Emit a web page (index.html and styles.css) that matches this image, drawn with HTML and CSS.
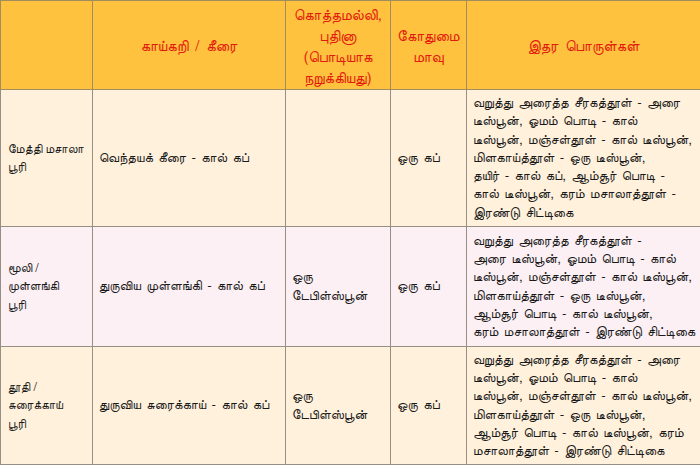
FILE: index.html
```html
<!DOCTYPE html>
<html lang="ta">
<head>
<meta charset="utf-8">
<link rel="stylesheet" href="styles.css">
</head>
<body>
<table class="recipes">
  <colgroup>
    <col class="c1"><col class="c2"><col class="c3"><col class="c4"><col class="c5">
  </colgroup>
  <thead>
    <tr class="head">
      <th></th>
      <th>காய்கறி / கீரை</th>
      <th>கொத்தமல்லி,<br>புதினா<br>(பொடியாக<br>நறுக்கியது)</th>
      <th>கோதுமை<br>மாவு</th>
      <th>இதர பொருள்கள்</th>
    </tr>
  </thead>
  <tbody>
    <tr class="r1">
      <td class="name">மேத்தி மசாலா<br>பூரி</td>
      <td>வெந்தயக் கீரை - கால் கப்</td>
      <td></td>
      <td>ஒரு கப்</td>
      <td>வறுத்து அரைத்த சீரகத்தூள் - அரை<br>டீஸ்பூன், ஓமம் பொடி - கால்<br>டீஸ்பூன், மஞ்சள்தூள் - கால் டீஸ்பூன்,<br>மிளகாய்த்தூள் - ஒரு டீஸ்பூன்,<br>தயிர் - கால் கப், ஆம்சூர் பொடி -<br>கால் டீஸ்பூன், கரம் மசாலாத்தூள் -<br>இரண்டு சிட்டிகை</td>
    </tr>
    <tr class="r2">
      <td class="name">மூலி /<br>முள்ளங்கி<br>பூரி</td>
      <td>துருவிய முள்ளங்கி - கால் கப்</td>
      <td>ஒரு<br>டேபிள்ஸ்பூன்</td>
      <td>ஒரு கப்</td>
      <td>வறுத்து அரைத்த சீரகத்தூள் -<br>அரை டீஸ்பூன், ஓமம் பொடி - கால்<br>டீஸ்பூன், மஞ்சள்தூள் - கால் டீஸ்பூன்,<br>மிளகாய்த்தூள் - ஒரு டீஸ்பூன்,<br>ஆம்சூர் பொடி - கால் டீஸ்பூன்,<br>கரம் மசாலாத்தூள் - இரண்டு சிட்டிகை</td>
    </tr>
    <tr class="r3">
      <td class="name">தூதி /<br>சுரைக்காய்<br>பூரி</td>
      <td>துருவிய சுரைக்காய் - கால் கப்</td>
      <td>ஒரு<br>டேபிள்ஸ்பூன்</td>
      <td>ஒரு கப்</td>
      <td>வறுத்து அரைத்த சீரகத்தூள் - அரை<br>டீஸ்பூன், ஓமம் பொடி - கால்<br>டீஸ்பூன், மஞ்சள்தூள் - கால் டீஸ்பூன்,<br>மிளகாய்த்தூள் - ஒரு டீஸ்பூன்,<br>ஆம்சூர் பொடி - கால் டீஸ்பூன், கரம்<br>மசாலாத்தூள் - இரண்டு சிட்டிகை</td>
    </tr>
  </tbody>
</table>
</body>
</html>
```
FILE: styles.css
```css
html, body {
  margin: 0;
  padding: 0;
  background: #ffffff;
}
body {
  font-family: "FreeSans", "Noto Sans Tamil", "Liberation Sans", sans-serif;
  font-size: 13.4px;
  color: #1a1a1a;
}
.recipes {
  border-collapse: collapse;
  table-layout: fixed;
  width: 700px;
}
.c1 { width: 92px; }
.c2 { width: 193px; }
.c3 { width: 105px; }
.c4 { width: 76px; }
.c5 { width: 234px; }
.recipes th,
.recipes td {
  border: 1px solid #958f84;
  padding: 2px 6px;
  vertical-align: middle;
  line-height: 18.3px;
  white-space: nowrap;
  overflow: hidden;
}
.recipes th {
  background: #fec23e;
  color: #e31b0e;
  font-weight: normal;
  font-size: 15px;
  word-spacing: 3px;
  text-align: center;
  line-height: 21px;
  padding: 3px 1px 0;
  border-color: #a08c5c;
}
.head { height: 89px; }
.r1 { height: 137px; background: #fff1dc; }
.r2 { height: 120px; background: #fcf0f4; }
.r3 { height: 118px; background: #fff1dc; }
.recipes td {
  text-align: left;
  word-spacing: 2px;
}
.recipes td.name {
  font-size: 12.3px;
  word-spacing: 0;
  padding-left: 7px;
}
```
